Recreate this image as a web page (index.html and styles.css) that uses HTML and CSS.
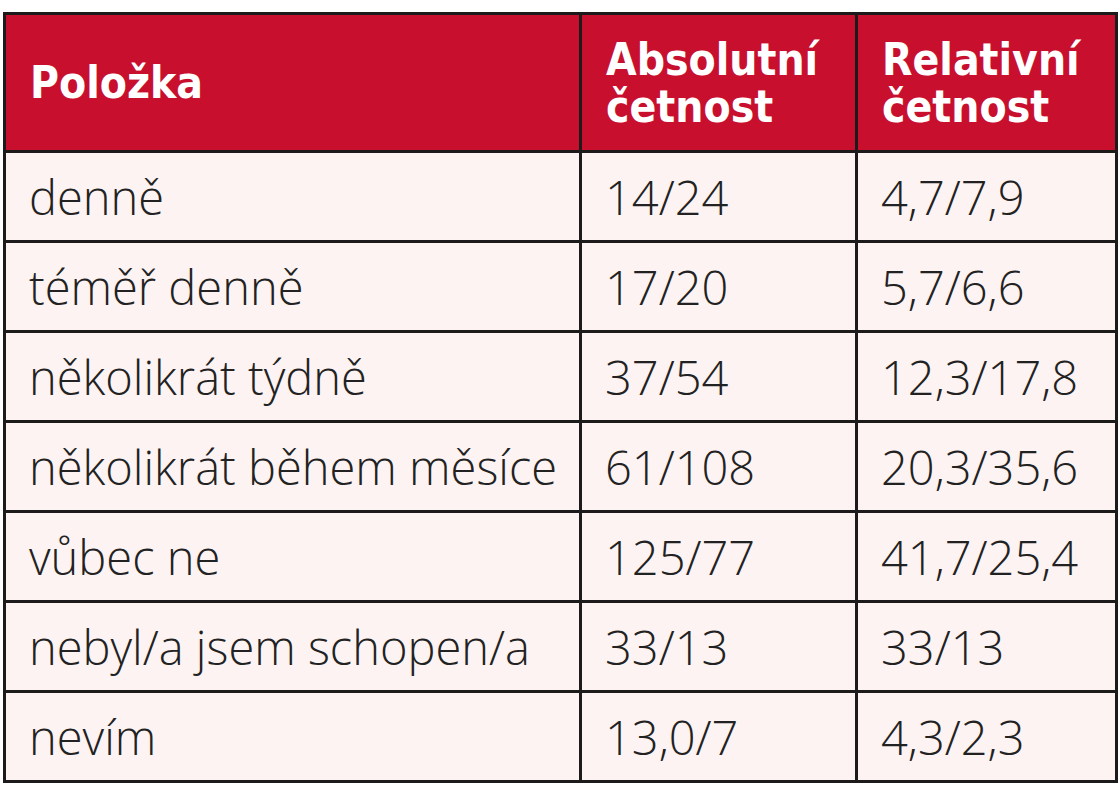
FILE: index.html
```html
<!DOCTYPE html>
<html lang="cs">
<head>
<meta charset="utf-8">
<title>Tabulka</title>
<link rel="stylesheet" href="styles.css">
</head>
<body>
<table class="freq">
  <colgroup>
    <col class="c1"><col class="c2"><col class="c3">
  </colgroup>
  <thead>
    <tr>
      <th>Položka</th>
      <th>Absolutní<br>četnost</th>
      <th>Relativní<br>četnost</th>
    </tr>
  </thead>
  <tbody>
    <tr><td>denně</td><td>14/24</td><td>4,7/7,9</td></tr>
    <tr><td>téměř denně</td><td>17/20</td><td>5,7/6,6</td></tr>
    <tr><td>několikrát týdně</td><td>37/54</td><td>12,3/17,8</td></tr>
    <tr><td>několikrát během měsíce</td><td>61/108</td><td>20,3/35,6</td></tr>
    <tr><td>vůbec ne</td><td>125/77</td><td>41,7/25,4</td></tr>
    <tr><td>nebyl/a jsem schopen/a</td><td>33/13</td><td>33/13</td></tr>
    <tr><td>nevím</td><td>13,0/7</td><td>4,3/2,3</td></tr>
  </tbody>
</table>
</body>
</html>
```

FILE: styles.css
```css
html, body {
  margin: 0;
  padding: 0;
  background: #ffffff;
}
body {
  padding: 12px 0 0 3px;
}
.freq {
  border-collapse: collapse;
  width: 1112px;
  table-layout: fixed;
  font-family: "Open Sans", "Liberation Sans", sans-serif;
}
.c1 { width: 576px; }
.c2 { width: 276px; }
.c3 { width: 260px; }
.freq th,
.freq td {
  border: 3px solid #1c1a1a;
  text-align: left;
  vertical-align: middle;
  padding: 0 0 0 23px;
}
.freq th {
  background: #c8102e;
  color: #ffffff;
  height: 135px;
  font-family: "DejaVu Sans Condensed", "DejaVu Sans", sans-serif;
  font-weight: bold;
  font-size: 44px;
  line-height: 47px;
  padding-left: 24px;
}
.freq td {
  background: #fdf3f2;
  color: #222222;
  height: 87px;
  font-size: 47px;
  font-weight: 300;
  white-space: nowrap;
}
```
